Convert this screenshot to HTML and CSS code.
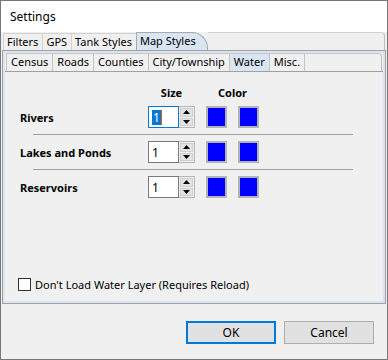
FILE: index.html
```html
<!DOCTYPE html>
<html lang="en">
<head>
  <meta charset="UTF-8">
  <title>Settings</title>
  <link rel="stylesheet" href="styles.css">
</head>
<body>
  <div class="window">
    <div class="titlebar">Settings</div>

    <div class="content">
      <div class="tabs outer-tabs">
        <div class="tab">Filters</div>
        <div class="tab">GPS</div>
        <div class="tab">Tank Styles</div>
        <div class="tab selected map-tab">Map Styles</div>
        <div class="tab-fill"></div>
      </div>

      <div class="outer-panel">
        <div class="tabs inner-tabs">
          <div class="tab">Census</div>
          <div class="tab">Roads</div>
          <div class="tab">Counties</div>
          <div class="tab">City/Township</div>
          <div class="tab selected">Water</div>
          <div class="tab">Misc.</div>
          <div class="tab-fill"></div>
        </div>

        <div class="inner-panel">
          <div class="head-row">
            <span class="head-size">Size</span>
            <span class="head-color">Color</span>
          </div>

          <div class="row">
            <span class="row-label">Rivers</span>
            <div class="spin">
              <div class="spin-input focused"><span class="sel">1</span><span class="caret"></span></div>
              <div class="spin-btns">
                <div class="spin-btn"><svg width="7" height="4" viewBox="0 0 7 4"><polygon points="3.5,0 7,4 0,4" fill="#000"/></svg></div>
                <div class="spin-btn"><svg width="7" height="4" viewBox="0 0 7 4"><polygon points="0,0 7,0 3.5,4" fill="#000"/></svg></div>
              </div>
            </div>
            <div class="swatch"></div>
            <div class="swatch"></div>
          </div>

          <div class="sep"></div>

          <div class="row">
            <span class="row-label">Lakes and Ponds</span>
            <div class="spin">
              <div class="spin-input">1</div>
              <div class="spin-btns">
                <div class="spin-btn"><svg width="7" height="4" viewBox="0 0 7 4"><polygon points="3.5,0 7,4 0,4" fill="#000"/></svg></div>
                <div class="spin-btn"><svg width="7" height="4" viewBox="0 0 7 4"><polygon points="0,0 7,0 3.5,4" fill="#000"/></svg></div>
              </div>
            </div>
            <div class="swatch"></div>
            <div class="swatch"></div>
          </div>

          <div class="sep"></div>

          <div class="row">
            <span class="row-label">Reservoirs</span>
            <div class="spin">
              <div class="spin-input">1</div>
              <div class="spin-btns">
                <div class="spin-btn"><svg width="7" height="4" viewBox="0 0 7 4"><polygon points="3.5,0 7,4 0,4" fill="#000"/></svg></div>
                <div class="spin-btn"><svg width="7" height="4" viewBox="0 0 7 4"><polygon points="0,0 7,0 3.5,4" fill="#000"/></svg></div>
              </div>
            </div>
            <div class="swatch"></div>
            <div class="swatch"></div>
          </div>

          <label class="check">
            <span class="check-box"></span>
            Don't Load Water Layer (Requires Reload)
          </label>
        </div>
      </div>

      <div class="buttons">
        <button class="btn default">OK</button>
        <button class="btn">Cancel</button>
      </div>
    </div>
  </div>
</body>
</html>
```

FILE: styles.css
```css
body {
  margin: 0;
  padding: 0;
  font-family: 'Noto Sans', 'Open Sans', sans-serif;
  font-size: 11px;
  color: #000;
  background: #fff;
}

.window {
  width: 388px;
  height: 360px;
  box-sizing: border-box;
  border: 1px solid #777;
  display: flex;
  flex-direction: column;
  background: #f0f0f0;
}

.titlebar {
  height: 31px;
  line-height: 31px;
  padding-left: 9px;
  font-size: 12px;
  background: #fff;
}

.content {
  flex: 1;
  display: flex;
  flex-direction: column;
  padding: 0 1px;
}

/* tab strips */
.tabs {
  display: flex;
  height: 18px;
}

.tab {
  box-sizing: border-box;
  height: 18px;
  line-height: 16px;
  padding: 0 3px;
  border: 1px solid #d2d2d2;
  border-bottom: none;
  border-right: none;
  background: #f0f0f0;
  white-space: nowrap;
}

.tab.selected {
  background: #d9e5f3;
  border-color: #a9a9a9;
  border-right: 1px solid #a9a9a9;
}

.outer-tabs .tab {
  margin-top: 1px;
  height: 17px;
  padding: 0 4px 0 3px;
}

.outer-tabs .tab:first-child {
  margin-left: 1px;
}

.outer-tabs .map-tab {
  margin-top: 0;
  height: 18px;
  padding-right: 11px;
  border-top-right-radius: 16px 16px;
}

.tab-fill {
  flex: 1;
  border-top: 1px solid #d2d2d2;
  border-right: 1px solid #bdbdbd;
  border-top-right-radius: 4px;
  margin-right: 1px;
}

.outer-panel {
  height: 254px;
  box-sizing: border-box;
  border: 1px solid #a0a0a0;
  padding: 2px;
  background: #d9e5f3;
  display: flex;
  flex-direction: column;
}

.inner-tabs {
  background: #f0f0f0;
}

.inner-tabs .tab {
  padding: 0 4px;
  border-color: #c4c4c4;
}

.inner-tabs .tab:first-child {
  margin-left: 1px;
}

.inner-tabs .tab.selected {
  border-right: none;
  border-color: #c4c4c4;
}

.inner-tabs .tab-fill {
  border-left: 1px solid #c4c4c4;
  border-top-color: #c4c4c4;
}

.inner-panel {
  flex: 1;
  background: #f0f0f0;
  border-top: 1px solid #a0a0a0;
  padding: 14px 0 9px 15px;
  display: flex;
  flex-direction: column;
}

/* size / color grid */
.head-row {
  display: flex;
  height: 14px;
  line-height: 14px;
  font-weight: bold;
  margin-bottom: 6px;
}

.head-size {
  margin-left: 128px;
  width: 47px;
  text-align: center;
}

.head-color {
  margin-left: 11px;
  width: 53px;
  text-align: center;
}

.row {
  display: flex;
  align-items: center;
  height: 22px;
}

.row-label {
  width: 128px;
  font-weight: bold;
}

.spin {
  display: flex;
  width: 47px;
  height: 22px;
}

.spin-input {
  box-sizing: border-box;
  width: 31px;
  height: 22px;
  border: 1px solid #7a7a7a;
  background: #fff;
  padding-left: 3px;
  font-size: 12px;
  display: flex;
  align-items: center;
}

.spin-input.focused {
  border-color: #0078d7;
}

.sel {
  background: #0078d7;
  color: #fff;
  line-height: 15px;
  padding: 0 1px;
}

.caret {
  width: 1px;
  height: 15px;
  background: #e06010;
}

.spin-btns {
  box-sizing: border-box;
  width: 16px;
  height: 22px;
  border: 1px solid #b5b5b5;
  border-left: none;
  display: flex;
  flex-direction: column;
  background: #f0f0f0;
  padding: 1px;
  gap: 1px;
}

.spin-btn {
  flex: 1;
  background: #e3e3e3;
  border: 1px solid #cfcfcf;
  display: flex;
  align-items: center;
  justify-content: center;
}

.spin-btn svg {
  display: block;
}

.swatch {
  box-sizing: border-box;
  width: 21px;
  height: 22px;
  margin-left: 11px;
  border: 2px solid #b4b4b4;
  background: #0000ff;
}

.sep {
  width: 320px;
  height: 1px;
  margin: 6px 0 6px 13px;
  background: #a0a0a0;
}

.check {
  margin-top: auto;
  margin-left: -2px;
  display: flex;
  align-items: center;
  height: 15px;
}

.check-box {
  box-sizing: border-box;
  width: 13px;
  height: 13px;
  border: 1px solid #333;
  background: #fff;
  margin-right: 4px;
}

/* dialog buttons */
.buttons {
  display: flex;
  justify-content: flex-end;
  gap: 8px;
  margin-top: 17px;
  padding-right: 12px;
}

.btn {
  box-sizing: border-box;
  width: 90px;
  height: 23px;
  font-family: inherit;
  font-size: 12px;
  color: #000;
  background: #e1e1e1;
  border: 1px solid #adadad;
  padding: 0;
}

.btn.default {
  border: 2px solid #0078d7;
}
```
